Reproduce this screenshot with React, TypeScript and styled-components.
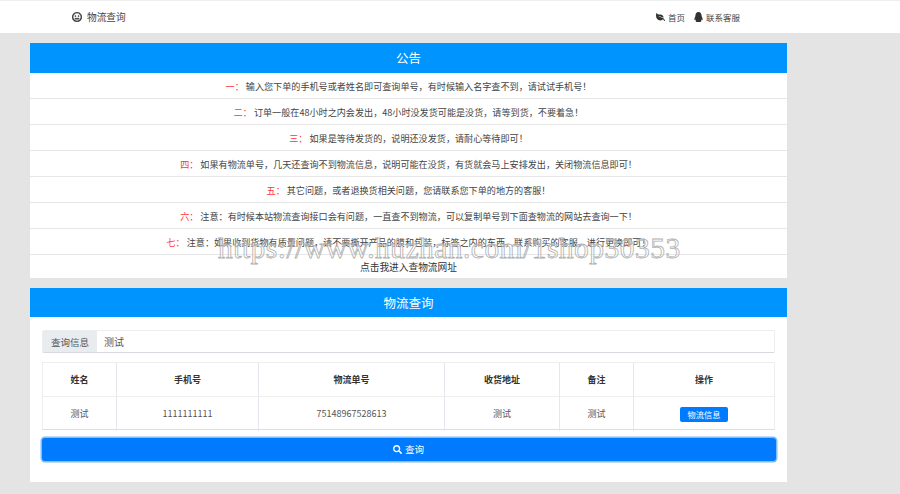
import styled, { createGlobalStyle } from "styled-components";
import { FaLeaf, FaQq, FaSearch, FaRegMeh } from "react-icons/fa";

const GlobalStyle = createGlobalStyle`
  html, body {
    margin: 0;
    padding: 0;
    height: 494px;
    overflow: hidden;
    background: #e4e4e4;
    font-family: "Noto Sans CJK SC", "Noto Sans", sans-serif;
    color: #333;
  }
  * {
    box-sizing: border-box;
  }
`;

const Page = styled.div`
  position: relative;
  width: 900px;
  height: 494px;
  overflow: hidden;
`;

const TopBar = styled.header`
  display: flex;
  align-items: center;
  justify-content: space-between;
  height: 33px;
  padding: 0 160px 0 72px;
  background: #fff;
  border-top: 1px solid #eee;
`;

const Brand = styled.div`
  display: flex;
  align-items: center;
  gap: 5px;
  font-size: 9.7px;
  color: #444;
  svg {
    width: 10px;
    height: 10px;
    color: #333;
    stroke: currentColor;
    stroke-width: 24px;
  }
`;

const TopLinks = styled.nav`
  display: flex;
  align-items: center;
  gap: 9px;
`;

const TopLink = styled.span`
  display: flex;
  align-items: center;
  gap: 3px;
  font-size: 8.5px;
  color: #444;
  svg {
    width: 9px;
    height: 10px;
    color: #333;
  }
`;

const FlippedLeaf = styled(FaLeaf)`
  transform: scaleX(-1);
`;

const Content = styled.main`
  display: flex;
  flex-direction: column;
  gap: 10px;
  width: 757px;
  margin: 10px 0 0 30px;
`;

const Panel = styled.section`
  background: #fff;
`;

const PanelTitle = styled.h2<{ $height: number }>`
  display: flex;
  align-items: center;
  justify-content: center;
  height: ${(p) => p.$height}px;
  margin: 0;
  padding-bottom: 1px;
  background: #0094ff;
  color: #fff;
  font-size: 12.5px;
  font-weight: 400;
`;

const NoticeRow = styled.div`
  display: flex;
  align-items: center;
  justify-content: center;
  height: 26px;
  border-bottom: 1px solid #e7e7e7;
  font-size: 9.1px;
  color: #444;
`;

const NoticeNo = styled.span`
  margin-right: 2px;
  color: #f33;
`;

const NoticeLink = styled.div`
  display: flex;
  align-items: center;
  justify-content: center;
  height: 23px;
  font-size: 9.7px;
  color: #333;
`;

const QueryBody = styled.div`
  display: flex;
  flex-direction: column;
  height: 165px;
  padding: 13px 12px 0;
`;

const InputGroup = styled.div`
  display: flex;
  height: 23px;
  border: 1px solid #eee;
  border-bottom: 1px solid #d8d8e0;
  border-radius: 2px;
`;

const InputLabel = styled.span`
  display: flex;
  align-items: center;
  padding: 0 8px;
  background: #e9ecef;
  color: #555;
  font-size: 9.5px;
`;

const InputValue = styled.span`
  display: flex;
  align-items: center;
  padding-left: 7px;
  color: #555;
  font-size: 10px;
`;

const Table = styled.div`
  display: grid;
  grid-template-columns: 74px 142px 186px 115px 74px 1fr;
  grid-auto-rows: 34px;
  height: 68px;
  margin-top: 9px;
  border: 1px solid #eee;
  border-bottom: 1px solid #ddd;
`;

const Cell = styled.div<{ $head?: boolean; $last?: boolean }>`
  display: flex;
  align-items: center;
  justify-content: center;
  padding-bottom: ${(p) => (p.$head ? 0 : 1)}px;
  border-right: ${(p) => (p.$last ? "none" : "1px solid #e6e6ec")};
  border-bottom: ${(p) => (p.$head ? "1px solid #eee" : "none")};
  font-size: 9px;
  font-weight: ${(p) => (p.$head ? 700 : 400)};
  color: ${(p) => (p.$head ? "#333" : "#555")};
`;

const InfoButton = styled.button`
  width: 48px;
  height: 15px;
  margin-top: 1px;
  padding: 0;
  border: none;
  border-radius: 2px;
  background: #007bff;
  color: #fff;
  font-family: inherit;
  font-size: 8.2px;
`;

const SearchButton = styled.button`
  display: flex;
  align-items: center;
  justify-content: center;
  gap: 3px;
  height: 23px;
  margin: 8px -0.5px 0;
  padding: 0 0 1px;
  border: none;
  border-radius: 3px;
  background: #007bff;
  box-shadow: 0 0 0 1.5px #80bdff;
  color: #fff;
  font-family: inherit;
  font-size: 9.5px;
  svg {
    width: 9px;
    height: 9px;
  }
`;

const Watermark = styled.div`
  position: absolute;
  left: 218px;
  top: 232px;
  font-family: "Liberation Serif", serif;
  font-size: 29.5px;
  letter-spacing: 0.47px;
  white-space: nowrap;
  color: rgba(255, 255, 255, 0.4);
  -webkit-text-stroke: 0.8px #b0b0b0;
`;

const notices = [
  ["一：", "输入您下单的手机号或者姓名即可查询单号，有时候输入名字查不到，请试试手机号！"],
  ["二：", "订单一般在48小时之内会发出，48小时没发货可能是没货，请等到货，不要着急！"],
  ["三：", "如果是等待发货的，说明还没发货，请耐心等待即可！"],
  ["四：", "如果有物流单号，几天还查询不到物流信息，说明可能在没货，有货就会马上安排发出，关闭物流信息即可！"],
  ["五：", "其它问题，或者退换货相关问题，您请联系您下单的地方的客服！"],
  ["六：", "注意：有时候本站物流查询接口会有问题，一直查不到物流，可以复制单号到下面查物流的网站去查询一下！"],
  ["七：", "注意：如果收到货物有质量问题，请不要撕开产品的膜和包装，标签之内的东西，联系购买的客服，进行更换即可！"],
];

const heads = ["姓名", "手机号", "物流单号", "收货地址", "备注", "操作"];
const values = ["测试", "1111111111", "75148967528613", "测试", "测试"];

export default function App() {
  return (
    <Page>
      <GlobalStyle />
      <TopBar>
        <Brand>
          <FaRegMeh />
          物流查询
        </Brand>
        <TopLinks>
          <TopLink>
            <FlippedLeaf />
            首页
          </TopLink>
          <TopLink>
            <FaQq />
            联系客服
          </TopLink>
        </TopLinks>
      </TopBar>
      <Content>
        <Panel>
          <PanelTitle $height={30}>公告</PanelTitle>
          {notices.map(([no, text]) => (
            <NoticeRow key={no}>
              <NoticeNo>{no}</NoticeNo>
              {text}
            </NoticeRow>
          ))}
          <NoticeLink>点击我进入查物流网址</NoticeLink>
        </Panel>
        <Panel>
          <PanelTitle $height={29}>物流查询</PanelTitle>
          <QueryBody>
            <InputGroup>
              <InputLabel>查询信息</InputLabel>
              <InputValue>测试</InputValue>
            </InputGroup>
            <Table>
              {heads.map((h, i) => (
                <Cell key={h} $head $last={i === 5}>
                  {h}
                </Cell>
              ))}
              {values.map((v, i) => (
                <Cell key={i}>{v}</Cell>
              ))}
              <Cell $last>
                <InfoButton>物流信息</InfoButton>
              </Cell>
            </Table>
            <SearchButton>
              <FaSearch />
              查询
            </SearchButton>
          </QueryBody>
        </Panel>
      </Content>
      <Watermark>https://www.huzhan.com/1shop30353</Watermark>
    </Page>
  );
}
